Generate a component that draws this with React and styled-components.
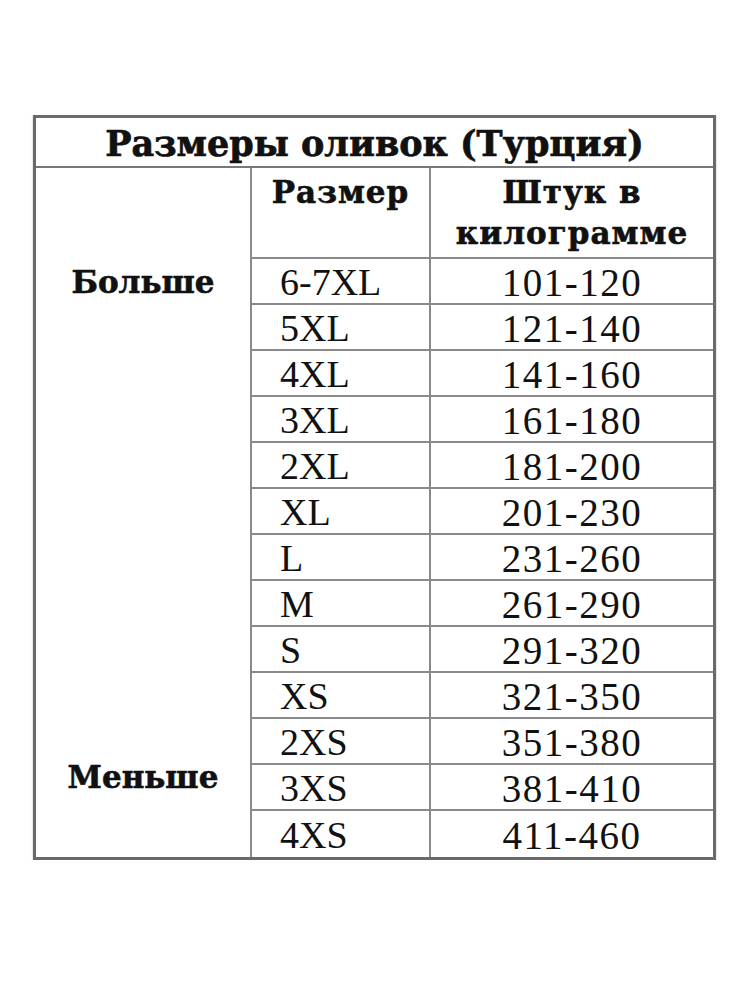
import React from "react";
import styled, { createGlobalStyle } from "styled-components";

const Global = createGlobalStyle`
  html, body { margin: 0; padding: 0; background: #fff; }
  body { font-family: "Liberation Serif", serif; color: #111; }
`;

const Page = styled.div`
  padding: 115px 0 0 33px;
`;

const Table = styled.div`
  width: 683px;
  box-sizing: border-box;
  border: 3px solid #6a6a6a;
  box-shadow: 0 1px 2px rgba(0,0,0,0.25);
`;

const Title = styled.div`
  height: 50px;
  box-sizing: border-box;
  border-bottom: 2px solid #777;
  display: flex;
  align-items: center;
  justify-content: center;
  font-family: "DejaVu Serif", serif;
  font-weight: bold;
  font-size: 35px;
  -webkit-text-stroke: 0.7px #111;
  padding-top: 2px;
`;

const Body = styled.div`
  display: grid;
  grid-template-columns: 214px 179px 1fr;
  grid-template-rows: 91px repeat(13, 46px);
`;

const Cell = styled.div`
  box-sizing: border-box;
  border-left: 2px solid #8a8a8a;
  border-bottom: ${(p) => (p.$last ? "none" : "2px solid #8a8a8a")};
  display: flex;
  align-items: center;
  grid-column: ${(p) => p.$col};
`;

const HeadCell = styled(Cell)`
  flex-direction: column;
  justify-content: flex-start;
  align-items: center;
  text-align: center;
  font-family: "DejaVu Serif", serif;
  font-weight: bold;
  font-size: 31px;
  letter-spacing: 1px;
  -webkit-text-stroke: 0.6px #111;
  line-height: 41px;
  padding-top: 4px;
`;

const SizeCell = styled(Cell)`
  padding-left: 28px;
  font-size: 38px;
  line-height: 1;
  padding-top: 2px;
`;

const CountCell = styled(Cell)`
  justify-content: center;
  font-size: 39px;
  letter-spacing: 1.5px;
  line-height: 1;
  padding-top: 2px;
`;

const SideLabel = styled.div`
  grid-column: 1;
  grid-row: ${(p) => p.$row};
  display: flex;
  align-items: center;
  justify-content: center;
  font-family: "DejaVu Serif", serif;
  font-weight: bold;
  font-size: 31px;
  -webkit-text-stroke: 0.6px #111;
  padding-top: ${(p) => p.$shift || 0}px;
`;

const rows = [
  ["6-7XL", "101-120"],
  ["5XL", "121-140"],
  ["4XL", "141-160"],
  ["3XL", "161-180"],
  ["2XL", "181-200"],
  ["XL", "201-230"],
  ["L", "231-260"],
  ["M", "261-290"],
  ["S", "291-320"],
  ["XS", "321-350"],
  ["2XS", "351-380"],
  ["3XS", "381-410"],
  ["4XS", "411-460"],
];

export default function App() {
  return (
    <>
      <Global />
      <Page>
        <Table>
          <Title>Размеры оливок (Турция)</Title>
          <Body>
            <SideLabel $row="2">Больше</SideLabel>
            <SideLabel $row="12 / span 2" $shift={24}>Меньше</SideLabel>
            <HeadCell $col={2}>Размер</HeadCell>
            <HeadCell $col={3}>
              <span>Штук в</span>
              <span>килограмме</span>
            </HeadCell>
            {rows.map(([s, c], i) => (
              <React.Fragment key={s}>
                <SizeCell $col={2} $last={i === rows.length - 1}>{s}</SizeCell>
                <CountCell $col={3} $last={i === rows.length - 1}>{c}</CountCell>
              </React.Fragment>
            ))}
          </Body>
        </Table>
      </Page>
    </>
  );
}
